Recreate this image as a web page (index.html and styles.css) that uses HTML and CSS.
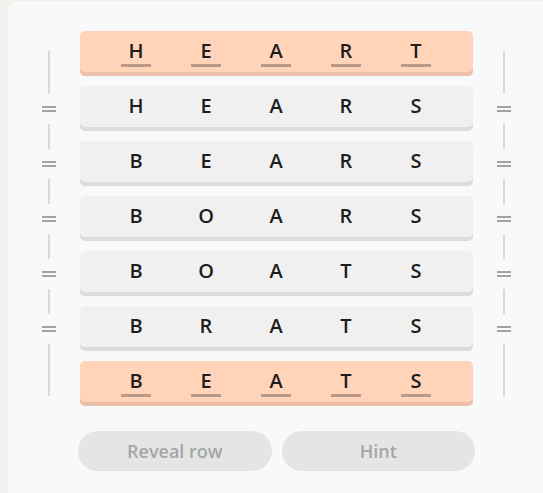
FILE: index.html
```html
<!DOCTYPE html>
<html>
<head>
<meta charset="utf-8">
<link rel="stylesheet" href="styles.css">
</head>
<body>
<div class="card">
  <div class="board">
    <div class="rail">
      <div class="seg seg-top"></div><div class="eq"><i></i><i></i></div>
      <div class="seg"></div><div class="eq"><i></i><i></i></div>
      <div class="seg"></div><div class="eq"><i></i><i></i></div>
      <div class="seg"></div><div class="eq"><i></i><i></i></div>
      <div class="seg"></div><div class="eq"><i></i><i></i></div>
      <div class="seg seg-bottom"></div>
    </div>
    <div class="rows">
      <div class="row fixed"><div class="cell"><span>H</span><b></b></div><div class="cell"><span>E</span><b></b></div><div class="cell"><span>A</span><b></b></div><div class="cell"><span>R</span><b></b></div><div class="cell"><span>T</span><b></b></div></div>
      <div class="row"><div class="cell"><span>H</span><b></b></div><div class="cell"><span>E</span><b></b></div><div class="cell"><span>A</span><b></b></div><div class="cell"><span>R</span><b></b></div><div class="cell"><span>S</span><b></b></div></div>
      <div class="row"><div class="cell"><span>B</span><b></b></div><div class="cell"><span>E</span><b></b></div><div class="cell"><span>A</span><b></b></div><div class="cell"><span>R</span><b></b></div><div class="cell"><span>S</span><b></b></div></div>
      <div class="row"><div class="cell"><span>B</span><b></b></div><div class="cell"><span>O</span><b></b></div><div class="cell"><span>A</span><b></b></div><div class="cell"><span>R</span><b></b></div><div class="cell"><span>S</span><b></b></div></div>
      <div class="row"><div class="cell"><span>B</span><b></b></div><div class="cell"><span>O</span><b></b></div><div class="cell"><span>A</span><b></b></div><div class="cell"><span>T</span><b></b></div><div class="cell"><span>S</span><b></b></div></div>
      <div class="row"><div class="cell"><span>B</span><b></b></div><div class="cell"><span>R</span><b></b></div><div class="cell"><span>A</span><b></b></div><div class="cell"><span>T</span><b></b></div><div class="cell"><span>S</span><b></b></div></div>
      <div class="row fixed"><div class="cell"><span>B</span><b></b></div><div class="cell"><span>E</span><b></b></div><div class="cell"><span>A</span><b></b></div><div class="cell"><span>T</span><b></b></div><div class="cell"><span>S</span><b></b></div></div>
    </div>
    <div class="rail">
      <div class="seg seg-top"></div><div class="eq"><i></i><i></i></div>
      <div class="seg"></div><div class="eq"><i></i><i></i></div>
      <div class="seg"></div><div class="eq"><i></i><i></i></div>
      <div class="seg"></div><div class="eq"><i></i><i></i></div>
      <div class="seg"></div><div class="eq"><i></i><i></i></div>
      <div class="seg seg-bottom"></div>
    </div>
    <div class="actions">
      <button class="btn">Reveal row</button>
      <button class="btn">Hint</button>
    </div>
  </div>
</div>
</body>
</html>
```

FILE: styles.css
```css
html, body {
  margin: 0;
  padding: 0;
  overflow: hidden;
  background: #f2f1ed;
}
body {
  padding: 1px 0 0 8px;
  font-family: "Open Sans", "Noto Sans", sans-serif;
}
.card {
  width: 545px;
  height: 492px;
  box-sizing: border-box;
  background: #f8f9fb;
  border-radius: 12px 12px 0 0;
  padding: 30px 0 0 26px;
}
.board {
  display: grid;
  grid-template-columns: 30px 393px 30px;
  column-gap: 16px;
  align-items: start;
}
.rail {
  display: flex;
  flex-direction: column;
  align-items: center;
  margin-top: 20px;
}
.seg {
  width: 2px;
  height: 25px;
  background: #d9d9d9;
}
.seg-top { height: 43px; }
.seg-bottom { height: 52px; }
.eq {
  height: 30px;
  display: flex;
  flex-direction: column;
  justify-content: center;
  gap: 2px;
}
.eq i {
  display: block;
  width: 14px;
  height: 2px;
  background: #a3a3a3;
}
.rows {
  display: flex;
  flex-direction: column;
  gap: 10px;
}
.row {
  height: 45px;
  box-sizing: border-box;
  border-radius: 5px;
  background: #f0f0f0;
  box-shadow: inset 0 -4px 0 #dcdcdc;
  display: grid;
  grid-template-columns: repeat(5, 70px);
  padding: 10px 0 0 21px;
}
.row.fixed {
  background: #ffd4b8;
  box-shadow: inset 0 -4px 0 #ecc0a8;
}
.cell {
  display: flex;
  flex-direction: column;
  align-items: center;
}
.cell span {
  font-size: 20px;
  line-height: 20px;
  font-weight: 600;
  color: #1c1c1c;
}
.cell b {
  display: block;
  width: 30px;
  height: 3px;
  margin-top: 3px;
}
.fixed .cell b {
  background: #b8998a;
}
.actions {
  grid-column: 2;
  display: grid;
  grid-template-columns: 1fr 1fr;
  gap: 10px;
  margin: 25px -2px 0;
}
.btn {
  height: 40px;
  border: none;
  border-radius: 20px;
  background: #e4e5e7;
  color: #a5a5a5;
  font-family: "Open Sans", "Noto Sans", sans-serif;
  font-size: 18px;
  font-weight: 600;
  padding: 0;
}
```
